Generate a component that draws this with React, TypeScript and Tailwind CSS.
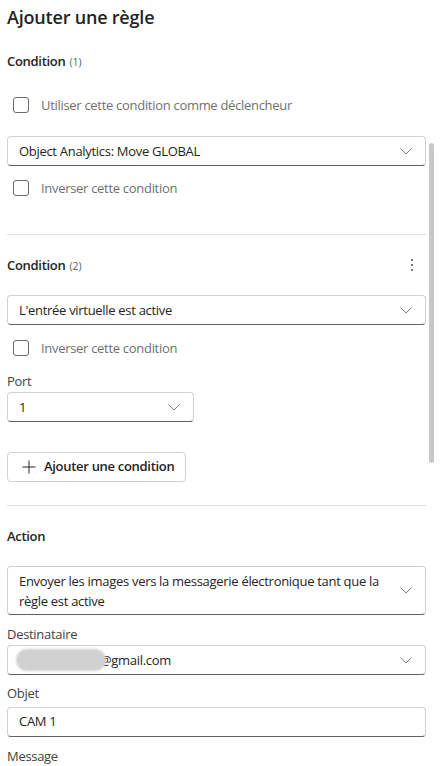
import React from "react";

const font = { fontFamily: '"Open Sans", "Noto Sans", Arial, sans-serif' };

function Chevron() {
  return (
    <svg width="12" height="7" viewBox="0 0 12 7" fill="none" className="shrink-0">
      <path d="M0.5 0.5 L6 6 L11.5 0.5" stroke="#707070" strokeWidth="0.9" />
    </svg>
  );
}

function Checkbox({ label, className = "" }: { label: string; className?: string }) {
  return (
    <div className={"flex items-center h-[20px] pl-[6px] " + className}>
      <div className="w-[16px] h-[16px] rounded-[3px] border border-[#6b6b6b] bg-white" />
      <span className="ml-[12px] text-[13px] tracking-[-0.3px] text-[#707070] leading-[20px]">{label}</span>
    </div>
  );
}

function Select({ children, className = "", h = "h-[30px]" }: { children: React.ReactNode; className?: string; h?: string }) {
  return (
    <div
      className={
        "flex items-center justify-between rounded-[4px] border border-[#d1d1d1] border-b-[#616161] bg-white pl-[11px] pr-[13px] " +
        h +
        " " +
        className
      }
    >
      <div className="text-[13px] tracking-[-0.3px] text-[#242424] leading-[20px]">{children}</div>
      <Chevron />
    </div>
  );
}

function Label({ children, className = "" }: { children: React.ReactNode; className?: string }) {
  return (
    <div className={"text-[13px] tracking-[-0.3px] text-[#424242] leading-[20px] h-[20px] " + className}>{children}</div>
  );
}

function SectionTitle({ title, count, className = "" }: { title: string; count?: string; className?: string }) {
  return (
    <div className={"h-[20px] leading-[20px] flex items-baseline " + className}>
      <span className="text-[13px] tracking-[-0.3px] font-semibold text-[#242424]">{title}</span>
      {count && <span className="ml-[4px] text-[10.5px] text-[#616161]">{count}</span>}
    </div>
  );
}

export default function App() {
  return (
    <div className="relative w-[442px] h-[766px] overflow-hidden bg-white" style={font}>
      <div className="pl-[7px] pr-[16px] pt-[3px]">
        <div className="h-[28px] leading-[28px] text-[18px] tracking-[-0.2px] font-semibold text-[#242424]">
          Ajouter une règle
        </div>

        <SectionTitle title="Condition" count="(1)" className="mt-[20px]" />
        <Checkbox label="Utiliser cette condition comme déclencheur" className="mt-[24px]" />
        <Select className="mt-[21px]">Object Analytics: Move GLOBAL</Select>
        <Checkbox label="Inverser cette condition" className="mt-[12px]" />

        <div className="mt-[36px] h-px bg-[#e0e0e0]" />

        <div className="mt-[20px] flex items-center justify-between">
          <SectionTitle title="Condition" count="(2)" />
          <div className="flex flex-col gap-[3px] pr-[13px]">
            <div className="w-[2px] h-[2px] rounded-full bg-[#424242]" />
            <div className="w-[2px] h-[2px] rounded-full bg-[#424242]" />
            <div className="w-[2px] h-[2px] rounded-full bg-[#424242]" />
          </div>
        </div>
        <Select className="mt-[20px]">L'entrée virtuelle est active</Select>
        <Checkbox label="Inverser cette condition" className="mt-[13px]" />
        <Label className="mt-[13px]">Port</Label>
        <Select className="mt-[1px] w-[187px]">1</Select>

        <button className="mt-[30px] h-[30px] w-[179px] flex items-center rounded-[4px] border border-[#d1d1d1] bg-white pl-[14px]">
          <svg width="14" height="14" viewBox="0 0 14 14" fill="none">
            <path d="M7 0.5 V13.5 M0.5 7 H13.5" stroke="#242424" strokeWidth="1" />
          </svg>
          <span className="ml-[8px] text-[13px] tracking-[-0.3px] font-semibold text-[#242424]">
            Ajouter une condition
          </span>
        </button>

        <div className="mt-[23px] h-px bg-[#e0e0e0]" />

        <SectionTitle title="Action" className="mt-[20px]" />
        <Select className="mt-[20px]" h="h-[49px]">
          Envoyer les images vers la messagerie électronique tant que la
          <br />
          règle est active
        </Select>
        <Label className="mt-[9px]">Destinataire</Label>
        <div className="relative mt-[1px]">
          <Select>
            <span className="pl-[81px]">@gmail.com</span>
          </Select>
          <div className="absolute left-[9px] top-[4px] w-[90px] h-[22px] rounded-full bg-[#d1d1d1] blur-[1px]" />
        </div>
        <Label className="mt-[8px]">Objet</Label>
        <div className="mt-[4px] h-[30px] flex items-center rounded-[4px] border border-[#d1d1d1] border-b-[#616161] pl-[11px] text-[13px] tracking-[-0.3px] text-[#242424]">
          CAM 1
        </div>
        <Label className="mt-[9px]">Message</Label>
      </div>

      <div className="absolute left-[429px] top-[143px] w-[5px] h-[320px] rounded-full bg-[#c8c8c8]" />
    </div>
  );
}
